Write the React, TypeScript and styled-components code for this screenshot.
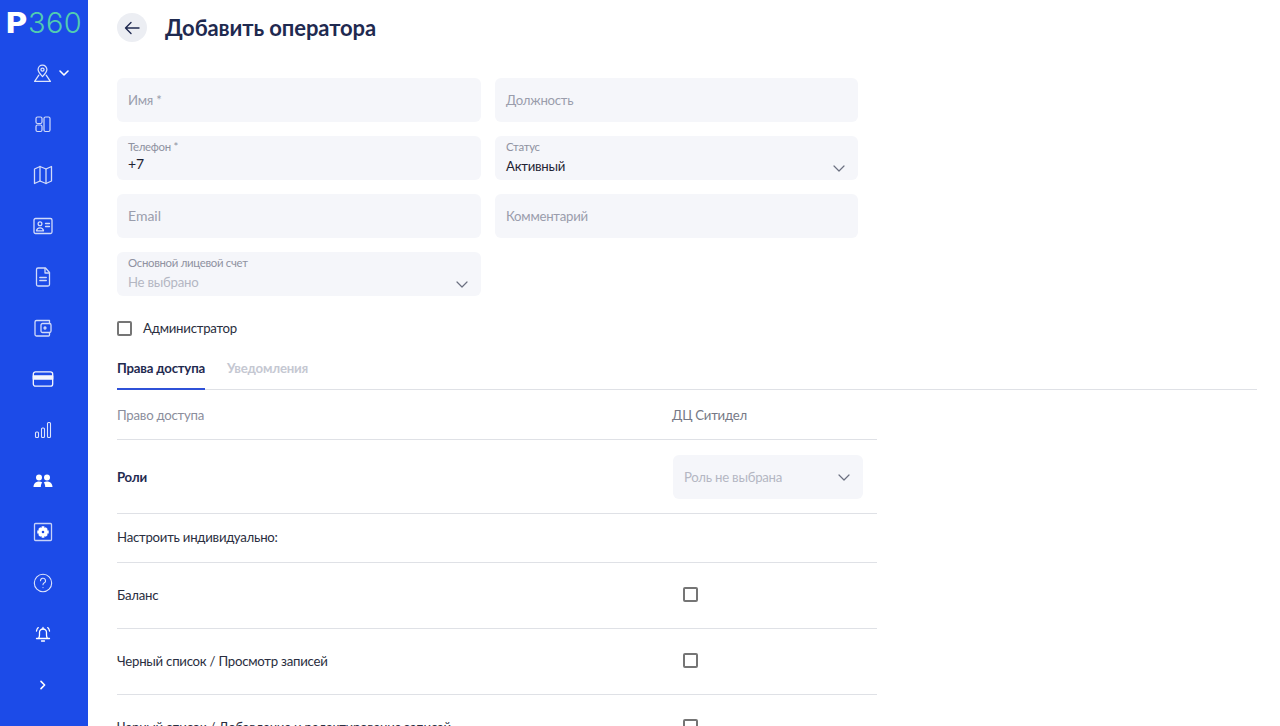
import React from 'react';
import styled, { createGlobalStyle } from 'styled-components';

const GlobalStyle = createGlobalStyle`
  html, body {
    margin: 0;
    height: 100%;
    overflow: hidden;
    background: #fff;
    font-family: Lato, Roboto, sans-serif;
  }
  #root { height: 100%; }
`;

const Page = styled.div`
  display: flex;
  height: 726px;
  overflow: hidden;
`;

const Sidebar = styled.aside`
  flex: 0 0 88px;
  background: #1c4be8;
  display: flex;
  flex-direction: column;
`;

const Logo = styled.div`
  height: 47.5px;
  flex: 0 0 47.5px;
  padding-left: 6px;
  line-height: 45px;
  font-family: Inter, sans-serif;
  font-size: 29px;
  white-space: nowrap;
  color: #52cdb0;
  font-weight: 300;
  letter-spacing: 0.4px;

  b {
    display: inline-block;
    width: 22px;
    color: #fff;
    font-weight: 800;
    transform: scaleX(1.12);
    transform-origin: left center;
  }
`;

const NavItem = styled.div`
  height: 51px;
  width: 85px;
  display: flex;
  align-items: center;
  justify-content: center;
  flex: 0 0 51px;
  position: relative;
  color: #fff;
`;

const NavChevron = styled.svg`
  position: absolute;
  left: 58px;
  top: 21px;
`;

const Main = styled.main`
  flex: 1;
  padding: 13px 23px 0 29px;
  min-width: 0;
`;

const Header = styled.div`
  display: flex;
  align-items: center;
  gap: 18px;
  height: 29px;
  margin-bottom: 36px;
`;

const BackButton = styled.button`
  width: 30px;
  height: 29px;
  border: 0;
  border-radius: 50%;
  background: #eceef3;
  padding: 0;
  color: #1f2a50;
  display: flex;
  align-items: center;
  justify-content: center;
`;

const Title = styled.h1`
  margin: 0;
  font-size: 22px;
  letter-spacing: -0.1px;
  font-weight: 700;
  color: #1f2a50;
  line-height: 29px;
`;

const FormGrid = styled.div`
  display: grid;
  grid-template-columns: 364px 363px;
  grid-auto-rows: 44px;
  gap: 14px;
`;

const Field = styled.div`
  position: relative;
  background: #f5f6fa;
  border-radius: 6px;
  padding: 0 11px;
  display: flex;
  flex-direction: column;
  justify-content: center;
`;

const Placeholder = styled.span`
  font-size: 13.2px;
  letter-spacing: -0.24px;
  line-height: 17px;
  margin-top: 1px;
  color: #9a9dac;
`;

const LatinPlaceholder = styled(Placeholder)`
  font-size: 14px;
  letter-spacing: 0;
  margin-top: -1px;
`;

const SmallLabel = styled.span`
  font-size: 11.4px;
  letter-spacing: -0.3px;
  line-height: 14px;
  color: #8f92a1;
  margin-top: -2px;
`;

const Value = styled.span<{ $muted?: boolean }>`
  font-size: 13.2px;
  letter-spacing: -0.24px;
  line-height: 17px;
  margin-top: 4px;
  color: ${(p) => (p.$muted ? '#b4b7c3' : '#1f2333')};
`;

const LatinValue = styled(Value)`
  font-size: 14px;
  letter-spacing: 0;
  margin-top: 1px;
  margin-bottom: 3px;
`;

const Caret = styled.svg`
  position: absolute;
  right: 13px;
  bottom: 8px;
  color: #6b7080;
`;

const CheckRow = styled.label`
  display: flex;
  align-items: center;
  gap: 11px;
  height: 20px;
  margin-top: 22px;
  font-size: 13.2px;
  letter-spacing: -0.24px;
  color: #2a2e40;
`;

const Box = styled.span`
  display: block;
  box-sizing: border-box;
  width: 15px;
  height: 15px;
  border: 2px solid #757575;
  border-radius: 2px;
  background: #fff;
`;

const Tabs = styled.div`
  display: flex;
  gap: 22px;
  margin-top: 18px;
  border-bottom: 1px solid #dfe1e6;
  height: 33px;
`;

const Tab = styled.div<{ $active?: boolean }>`
  font-size: 13.2px;
  letter-spacing: -0.2px;
  font-weight: 700;
  line-height: 22px;
  padding-top: 1px;
  height: 34px;
  box-sizing: border-box;
  color: ${(p) => (p.$active ? '#1f2a50' : '#c5c8d2')};
  border-bottom: ${(p) => (p.$active ? '2px solid #2f51d8' : '0')};
`;

const Table = styled.div`
  width: 760px;
`;

const Row = styled.div<{ $h: number }>`
  display: grid;
  grid-template-columns: 556px 1fr;
  align-items: center;
  height: ${(p) => p.$h}px;
  box-sizing: border-box;
  border-bottom: 1px solid #dfe1e6;
  font-size: 13.2px;
  letter-spacing: -0.24px;
  color: #2a2e40;
`;

const HeadCell = styled.div`
  color: #8b8e9c;
`;

const HeadCellDark = styled.div`
  color: #767986;
  margin-left: -1px;
`;

const RoleName = styled.div`
  font-weight: 700;
  color: #1f2a50;
`;

const RoleSelect = styled.div`
  position: relative;
  width: 190px;
  height: 44px;
  background: #f5f6fa;
  border-radius: 6px;
  display: flex;
  align-items: center;
  padding-left: 11px;
  box-sizing: border-box;
  color: #b4b7c3;
`;

const RoleCaret = styled(Caret)`
  bottom: 18px;
`;

const PermName = styled.div`
  margin-top: -2px;
`;

const BoxCell = styled.div`
  padding-left: 10px;
  margin-top: -2px;
`;

const Ic: React.FC<{ size?: number; sw?: number; op?: number; children: React.ReactNode }> = ({
  size = 20,
  sw = 1.3,
  op = 0.85,
  children,
}) => (
  <svg
    width={size}
    height={size}
    viewBox="0 0 20 20"
    fill="none"
    stroke="currentColor"
    strokeWidth={sw}
    strokeLinecap="round"
    strokeLinejoin="round"
    opacity={op}
  >
    {children}
  </svg>
);

const icons: React.ReactNode[] = [
  <Ic key="pin" size={21} sw={1.2}>
    <path d="M10 13c2.600-2.600 4.200-4.700 4.200-6.700a4.200 4.200 0 0 0-8.400 0c0 2 1.600 4.100 4.200 6.700z" />
    <circle cx="10" cy="6.300" r="1.500" />
    <path d="M6.500 11.500 2.500 17.500h15l-4-6" />
  </Ic>,
  <Ic key="dash" size={20} sw={1.200} op={0.8}>
    <rect x="3" y="3" width="6" height="6.500" rx="1.500" />
    <rect x="3" y="11" width="6" height="6.500" rx="1.500" />
    <rect x="11" y="3" width="6" height="14.500" rx="1.500" />
  </Ic>,
  <Ic key="map" size={20} op={0.8}>
    <path d="M1.500 4 7 1.500l6 2.500 5.500-2.500v14.500L13 18.500 7 16 1.500 18.500z" />
    <path d="M7 1.500V16M13 4v14.500" />
  </Ic>,
  <Ic key="card" size={20} op={0.8}>
    <rect x="1" y="2.500" width="18" height="15" rx="1.500" />
    <circle cx="7" cy="7.700" r="1.900" />
    <path d="M3.500 14.800c.3-2.300 1.600-3 3.500-3s3.200.7 3.500 3zM12.500 7.500H16.500M12.500 10.500H16.500" />
  </Ic>,
  <Ic key="doc" size={20} op={0.8}>
    <path d="M3.500 2.500A1.500 1.500 0 0 1 5 1h7.500L16.500 5.500V17.500A1.500 1.500 0 0 1 15 19H5a1.500 1.500 0 0 1-1.500-1.500z" />
    <path d="M12 1.500V6h4.500M6.800 10.500h6.500M6.800 13.500h6.500" />
  </Ic>,
  <Ic key="wallet" size={20} op={0.8}>
    <path d="M16.500 5.500V2.500H3.500A1.500 1.500 0 0 0 2 4v12.500A1.500 1.500 0 0 0 3.500 18h12a1 1 0 0 0 1-1v-2.500" />
    <rect x="8" y="5.500" width="10" height="9" rx="1.500" />
    <circle cx="12" cy="10" r="1" />
  </Ic>,
  <Ic key="pay" size={22} sw={1.200} op={0.95}>
    <rect x="1.200" y="3.500" width="17.600" height="13" rx="2" />
    <path d="M1.200 7.200h17.600v2.800H1.200z" fill="currentColor" />
  </Ic>,
  <Ic key="bars" size={20} sw={1.100} op={0.85}>
    <rect x="2.500" y="12" width="3" height="5.500" rx="1" />
    <rect x="8.500" y="8" width="3" height="9.500" rx="1" />
    <rect x="14.500" y="2.500" width="3" height="15" rx="1" />
  </Ic>,
  <svg key="users" width="20" height="20" viewBox="0 0 20 20" fill="currentColor">
    <circle cx="6" cy="6.500" r="3" />
    <circle cx="14" cy="6.500" r="3" />
    <path d="M0.500 16c0-3.400 2.400-5.500 5.500-5.500 1.200 0 2.400.3 3.300 1-1 1-1.500 2.500-1.500 4.500zM19.500 16c0-3.400-2.400-5.500-5.500-5.500-1.200 0-2.300.3-3.300 1 1 1 1.500 2.500 1.500 4.500z" />
  </svg>,
  <svg key="gear" width="20" height="20" viewBox="0 0 20 20" fill="none">
    <rect x="1.500" y="1.500" width="17" height="17" rx="1" stroke="currentColor" strokeWidth="1.300" opacity="0.75" />
    <path
      fill="currentColor"
      fillRule="evenodd"
      d="M8.700 4.200h2.600l.3 1.700 1.200-.7 1.900 1.900-.7 1.200 1.700.3v2.800l-1.700.3.700 1.200-1.900 1.900-1.200-.7-.3 1.700H8.700l-.3-1.700-1.200.7-1.900-1.900.7-1.200-1.700-.3V8.600l1.700-.3-.7-1.200 1.900-1.900 1.200.7zM10 8.700a1.300 1.300 0 1 0 0 2.600 1.300 1.300 0 0 0 0-2.600z"
    />
  </svg>,
  <Ic key="help" size={20} sw={1.100} op={0.85}>
    <circle cx="10" cy="10" r="8.700" />
    <path d="M7.500 7.800A2.500 2.500 0 1 1 11 10c-.7.400-1 .9-1 1.800" />
    <path d="M10 14.500v.1" />
  </Ic>,
  <Ic key="bell" size={20} sw={1.300} op={1}>
    <path d="M5.500 14.500c.6-1 1-2 1-3.500V8.500a3.500 3.500 0 0 1 7 0V11c0 1.500.4 2.500 1 3.500zM3.500 14.500h13M8.500 17h3" />
    <path d="M3.500 7c.2-1.400.8-2.500 1.800-3.400M16.500 7c-.2-1.400-.8-2.500-1.800-3.400M10 3.500V5" />
  </Ic>,
  <Ic key="next" size={16} sw={2} op={1}>
    <path d="M7.500 5.500 12 10l-4.500 4.500" />
  </Ic>,
];

const ChevronDown: React.FC = () => (
  <Caret width="12" height="7" viewBox="0 0 12 7" fill="none" stroke="currentColor" strokeWidth="1.200" strokeLinecap="round" strokeLinejoin="round">
    <path d="M1 1l5 5 5-5" />
  </Caret>
);

const permissions = ['Баланс', 'Черный список / Просмотр записей', 'Черный список / Добавление и редактирование записей'];

export default function App() {
  return (
    <Page>
      <GlobalStyle />
      <Sidebar>
        <Logo>
          <b>P</b>360
        </Logo>
        {icons.map((icon, i) => (
          <NavItem key={i}>
            {icon}
            {i === 0 && (
              <NavChevron width="12" height="8" viewBox="0 0 12 8" fill="none" stroke="currentColor" strokeWidth="1.600" strokeLinecap="round" strokeLinejoin="round">
                <path d="M2 2l4 4 4-4" />
              </NavChevron>
            )}
          </NavItem>
        ))}
      </Sidebar>
      <Main>
        <Header>
          <BackButton aria-label="Назад">
            <svg width="18" height="18" viewBox="0 0 18 18" fill="none" stroke="currentColor" strokeWidth="1.400" strokeLinecap="round" strokeLinejoin="round">
              <path d="M16 9H2.500M8 3.500 2.500 9 8 14.500" />
            </svg>
          </BackButton>
          <Title>Добавить оператора</Title>
        </Header>
        <FormGrid>
          <Field>
            <Placeholder>Имя *</Placeholder>
          </Field>
          <Field>
            <Placeholder>Должность</Placeholder>
          </Field>
          <Field>
            <SmallLabel>Телефон *</SmallLabel>
            <LatinValue>+7</LatinValue>
          </Field>
          <Field>
            <SmallLabel>Статус</SmallLabel>
            <Value>Активный</Value>
            <ChevronDown />
          </Field>
          <Field>
            <LatinPlaceholder>Email</LatinPlaceholder>
          </Field>
          <Field>
            <Placeholder>Комментарий</Placeholder>
          </Field>
          <Field>
            <SmallLabel>Основной лицевой счет</SmallLabel>
            <Value $muted>Не выбрано</Value>
            <ChevronDown />
          </Field>
        </FormGrid>
        <CheckRow>
          <Box />
          Администратор
        </CheckRow>
        <Tabs>
          <Tab $active>Права доступа</Tab>
          <Tab>Уведомления</Tab>
        </Tabs>
        <Table>
          <Row $h={50}>
            <HeadCell>Право доступа</HeadCell>
            <HeadCellDark>ДЦ Ситидел</HeadCellDark>
          </Row>
          <Row $h={74}>
            <RoleName>Роли</RoleName>
            <RoleSelect>
              Роль не выбрана
              <RoleCaret width="12" height="7" viewBox="0 0 12 7" fill="none" stroke="currentColor" strokeWidth="1.200" strokeLinecap="round" strokeLinejoin="round">
                <path d="M1 1l5 5 5-5" />
              </RoleCaret>
            </RoleSelect>
          </Row>
          <Row $h={49}>
            <PermName>Настроить индивидуально:</PermName>
          </Row>
          {permissions.map((name) => (
            <Row $h={66} key={name}>
              <PermName>{name}</PermName>
              <BoxCell>
                <Box />
              </BoxCell>
            </Row>
          ))}
        </Table>
      </Main>
    </Page>
  );
}
